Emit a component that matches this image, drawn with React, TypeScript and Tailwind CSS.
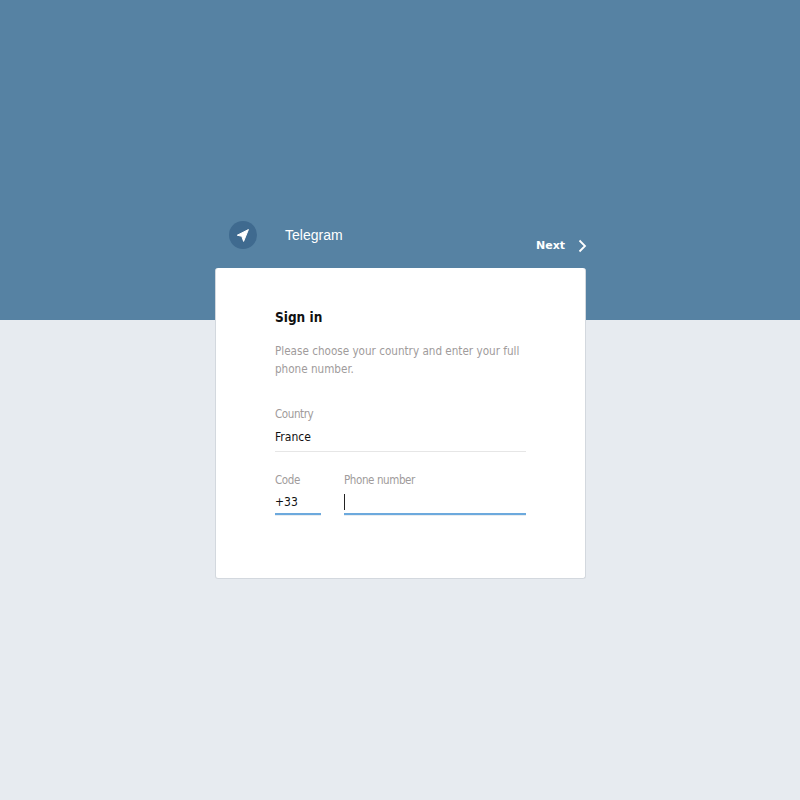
import React from 'react';

const bodyFont = "font-['DejaVu_Sans_Condensed','DejaVu_Sans',sans-serif]";

function Field({ label, value, active, className }: { label: string; value?: string; active?: boolean; className?: string }) {
  return (
    <div className={className}>
      <div className="h-[15px] text-[11.5px] leading-[15px] tracking-[-0.4px] text-[#a09b9b]">{label}</div>
      <div className={`flex items-center text-[12px] text-[#111] ${active ? 'mt-[2px] h-[23px]' : 'mt-px h-[28px]'}`}>
        {value}
        {active && !value && <span className="h-[16px] w-px bg-[#222]" />}
      </div>
      {active ? <div className="h-[2px] bg-[#6ca9dd]" /> : <div className="h-px bg-[#e6e6e6]" />}
      {active && <div className="h-px bg-[#e9edf0]" />}
    </div>
  );
}

export default function App() {
  return (
    <div className={`h-[800px] w-[800px] overflow-hidden bg-[linear-gradient(#5682a3_320px,#e7ebf0_320px)] pt-[221px] ${bodyFont}`}>
      <div className="ml-[215px] w-[371px]">
        <div className="flex h-[47px] items-start">
          <div className="ml-[14px] flex h-[28px] w-[28px] items-center justify-center rounded-full bg-[#3f6a8f]">
            <svg width="14" height="14" viewBox="0 0 14 14">
              <path d="M12.4 1.6 L1.3 7.2 L5.8 8.3 L7.6 13.4 Z" fill="#fff" stroke="#fff" strokeWidth="1" strokeLinejoin="round" />
            </svg>
          </div>
          <div className="ml-[28px] mt-[5px] font-['Liberation_Sans',sans-serif] text-[14px] leading-[18px] text-white">Telegram</div>
          <div className="ml-auto mt-[18px] mr-[-1px] flex items-center">
            <span className="font-['DejaVu_Sans',sans-serif] text-[11px] font-bold leading-[14px] text-white">Next</span>
            <svg className="ml-[13px]" width="9" height="14" viewBox="0 0 9 14" fill="none">
              <path d="M1.5 1.5 L7 7 L1.5 12.5" stroke="#fff" strokeWidth="1.8" />
            </svg>
          </div>
        </div>
        <div className="h-[311px] rounded-[3px] border border-[#d3d8de] border-t-0 bg-white pl-[59px] pr-[59px] pt-[41px]">
          <h1 className="text-[13.5px] font-bold leading-[17px] text-[#111]">Sign in</h1>
          <p className="mt-[16px] text-[11.6px] leading-[18px] text-[#a09b9b]">
            Please choose your country and enter your full phone number.
          </p>
          <Field className="mt-[29px]" label="Country" value="France" />
          <div className="mt-[21px] flex gap-[23px]">
            <Field className="w-[46px]" label="Code" value="+33" active />
            <Field className="flex-1" label="Phone number" active />
          </div>
        </div>
      </div>
    </div>
  );
}
